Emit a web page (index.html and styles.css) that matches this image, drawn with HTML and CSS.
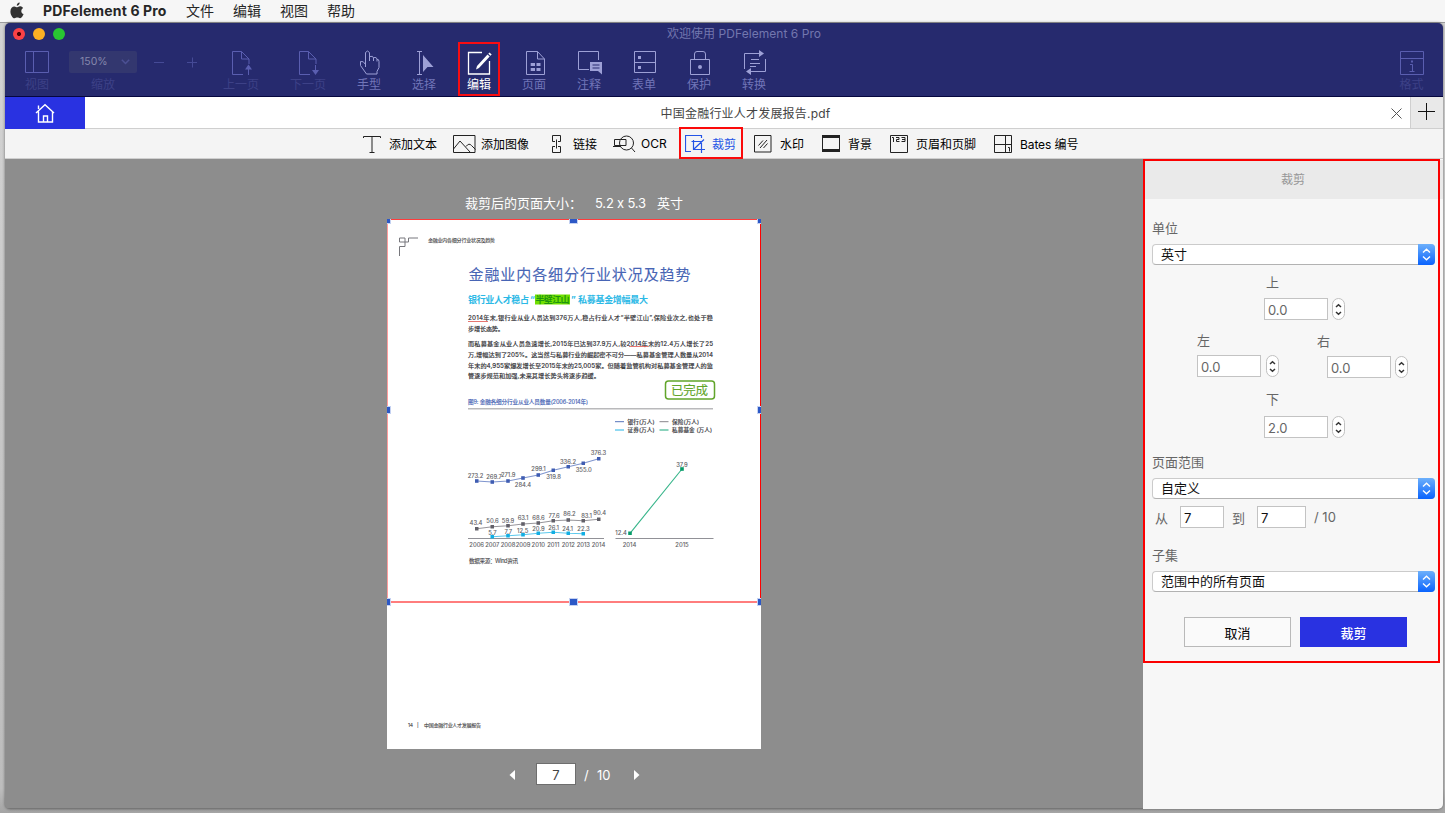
FILE: index.html
```
<!DOCTYPE html>
<html lang="zh-CN">
<head>
<meta charset="utf-8">
<title>PDFelement 6 Pro</title>
<link rel="stylesheet" href="styles.css">
</head>
<body>
<nav class="menubar">
  <svg class="apple" width="14" height="17" viewBox="0 0 14 17"><path d="M9.700 0.500c0.100 1.600-1.200 3.100-2.900 3.200C6.600 2.200 8 0.700 9.700 0.500zM9.800 4.300c0.700 0 2.200 0.200 3.300 1.600-2.600 1.700-2.300 5 0.500 6.200-0.600 1.700-2 4.100-3.500 4.100-1.100 0-1.500-0.700-2.800-0.700-1.300 0-1.700 0.700-2.800 0.700C2.500 16.200 0.400 12.600 0.400 9.400c0-3.200 2-5 4-5 1.200 0 2.100 0.800 2.900 0.800 0.700 0 1.600-0.900 2.500-0.900z"/></svg>
  <strong class="app">PDFelement 6 Pro</strong>
  <span>文件</span><span>编辑</span><span>视图</span><span>帮助</span>
</nav>
<div class="window">
  <header class="titlebar">
    <div class="lights"><i class="red"></i><i class="yellow"></i><i class="green"></i></div>
    <div class="wtitle">欢迎使用 <span>PDFelement 6 Pro</span></div>
  </header>
  <div class="tools">
    <div class="tool off view">
      <svg width="28" height="28"><path d="M2.500 3.500h23v21h-23zM10.500 3.500v21"/></svg>视图
    </div>
    <div class="tool off zoom">
      <div class="zoombox">150%<svg width="9" height="6"><path d="M0.800 0.800l3.700 3.700 3.700-3.700"/></svg></div>缩放
    </div>
    <div class="tool off minus"><svg width="28" height="28"><path d="M9 14.500h10"/></svg></div>
    <div class="tool off plus"><svg width="28" height="28"><path d="M9 14.500h10M14.500 9.500v10"/></svg></div>
    <div class="tool off prev">
      <svg width="28" height="28"><path d="M16 26.500H5.500V3.500h9l7.500 7.500v5M14.500 3.500v7.500H22M21.500 19v8"/><path class="fill" d="M21.500 16.500l3.500 5h-7z"/></svg>上一页
    </div>
    <div class="tool off next">
      <svg width="28" height="28"><path d="M16 26.500H5.500V3.500h9l7.500 7.500v5M14.500 3.500v7.500H22M21.500 17v7"/><path class="fill" d="M21.500 27l3.500-5h-7z"/></svg>下一页
    </div>
    <div class="tool hand">
      <svg width="28" height="28"><path d="M10.500 19V4.500q2-3 4 0V13M14.500 8.500q4-1 4 1.500v3M18.500 9.500q3.500-0.500 3.500 1.500v2.500M22 11.500q2-0.500 2 2v6l-2 4v2.500H11.500l-6-8.500v-4q3-1 5 3"/></svg>手型
    </div>
    <div class="tool">
      <svg width="28" height="28"><path d="M7 3.500h5M7 26.500h5M9.500 3.500v23"/><path class="fill" d="M13 7l10.500 12h-6L13 24z"/></svg>选择
    </div>
    <div class="tool on">
      <svg width="28" height="28"><path d="M17 4.500H3.500v21.500h21V13" stroke-width="1.300"/><path class="fill" d="M11 21.500l1-3.500L22.500 6.500l2.200 2L14 20zM23.300 5.700l1.200-1.200 2.200 2-1.200 1.300z"/></svg>编辑
    </div>
    <div class="tool">
      <svg width="28" height="28"><path d="M6.500 3.500h11l7 7.500v15.500h-18zM17.500 3.500v7.500h7"/><path class="fill" d="M10.700 15h4.300v3h-4.300zM16.500 15h4v3h-4zM10.700 20h4.300v3h-4.300zM16.500 20h4v3h-4z"/></svg>页面
    </div>
    <div class="tool">
      <svg width="28" height="28"><path d="M14 21.500H3.500v-18h20V12"/><path class="fill" fill-rule="evenodd" d="M15 14h12v12.500l-4-3.500h-8zM17.500 16.500v1h7v-1zM17.500 19.500v1h7v-1z"/></svg>注释
    </div>
    <div class="tool">
      <svg width="28" height="28"><path d="M4.500 3.500h21v21h-21zM4.500 14.500h21"/><path class="fill" d="M8 8h3v3H8zM8 18h3v3H8z"/></svg>表单
    </div>
    <div class="tool">
      <svg width="28" height="28"><path d="M5.500 11.500h19v15h-19zM9.500 11.500V6q0-2.500 2.500-2.500h6q2.500 0 2.500 2.500v5.500"/><circle class="fill" cx="15" cy="19" r="2"/></svg>保护
    </div>
    <div class="tool">
      <svg width="28" height="28"><path d="M4.500 21V5.500H19M8 23.500h17.500V11M11 11.500h8M10 15.500h10M10 18.500h6"/><path class="fill" d="M19 2l5 3.500-5 3.500zM11 20l-5 3.500 5 3.500z"/></svg>转换
    </div>
    <div class="tool off format">
      <svg width="28" height="28"><path d="M2.500 3.500h23v23h-23zM2.500 10.500h23M12 16.500h2.500v7M11.500 23.500h5"/><path class="fill" d="M13 12.500h2v2h-2z"/></svg>格式
    </div>
  </div>
  <div class="tabs">
    <div class="home"><svg width="20" height="20"><path d="M1 10L10 1.800 19 10M3.500 8.500v10.500h14V8.500M8.500 19v-6h4v6M3.500 6V2.500"/></svg></div>
    <div class="tab">中国金融行业人才发展报告.pdf</div>
    <svg class="close" width="11" height="11"><path d="M0.500 0.500l10 10M10.500 0.500l-10 10"/></svg>
    <div class="add"><svg width="17" height="17"><path d="M0 8.500h17M8.500 0v17"/></svg></div>
  </div>
  <div class="subtools">
    <div class="sub s1"><svg width="18" height="18"><path d="M0.500 3V1.500h17V3M9 1.500v16M6.500 17.500h5"/></svg>添加文本</div>
    <div class="sub s2"><svg width="23" height="18"><path d="M0.500 0.500h21.500v17H0.500zM0.500 14L7 6l10 11M13 11.500q3-4 5.500-1l4 4"/></svg>添加图像</div>
    <div class="sub s3"><svg width="10" height="18"><path d="M3 6.500H0.500v-6h8v6H6M3 11.500H0.500v6h8v-6H6M4.500 4.500v9"/></svg>链接</div>
    <div class="sub s4"><svg width="23" height="18"><path d="M7 4.500H1.500v6H13v-6H8M0 11.500h8"/><circle cx="13.500" cy="8" r="7"/><path d="M18.500 13l3.500 4"/></svg>OCR</div>
    <div class="sub s5"><svg width="21" height="18"><path d="M6 16.500H0.500V0.500h16V3M8.500 5v9.500H20M6.500 6.500h10V18M9 14L19 4.500"/></svg>裁剪</div>
    <div class="sub s6"><svg width="18" height="18"><path d="M0.500 0.500h16.500v16.500H0.500zM4.500 10.500L9 5.500M6 13l7-8M9.500 13l4-4.500"/></svg>水印</div>
    <div class="sub s7"><svg width="19" height="18"><path d="M0.500 0.500h17v16h-17z"/><path class="fill" d="M0 0h18v3H0zM0 14h18v3H0z"/></svg>背景</div>
    <div class="sub s8"><svg width="19" height="18"><path d="M0.500 0.500h17v17h-17z"/><path d="M2 2.500h1.500V7M6 2.500h3v2h-2.500v2h3M11.500 2.500h3.500v4h-3.500M12 4.500h3"/></svg>页眉和页脚</div>
    <div class="sub s9"><svg width="19" height="18"><path d="M0.500 0.500h17v17h-17zM11.500 0.500v17M0.500 9.500h17M14 12.500h1.500v4"/></svg>Bates 编号</div>
  </div>
  <div class="work">
    <main class="canvas">
      <div class="size"><span>裁剪后的页面大小：</span><span>5.2 x 5.3</span><span>英寸</span></div>
      <div class="page">
        <svg class="sheet" width="374" height="529" viewBox="387 220 374 529">
          <g class="mark"><path d="M399.500 256v-9.500h5.500v-8.500h-5.500v4h9v-4h9.500" /></g>
          <g class="small">
            <text x="428" y="242.300" textLength="67">金融业内各细分行业状况及趋势</text>
            <text x="408" y="727.300" textLength="5">14</text><text x="417" y="727">|</text>
            <text x="424" y="727.300" textLength="57">中国金融行业人才发展报告</text>
          </g>
          <text class="h1" x="468.500" y="280.300" textLength="222">金融业内各细分行业状况及趋势</text>
          <rect x="535" y="294.500" width="35" height="10" fill="#70e000"/>
          <g class="h2">
            <text x="468" y="303" textLength="61">银行业人才稳占</text><text x="530" y="303">“</text>
            <text x="535.500" y="303" textLength="34" class="hl">半壁江山</text><text x="571" y="303">”</text>
            <text x="578" y="303" textLength="70">私募基金增幅最大</text>
          </g>
          <g class="body">
            <text x="468" y="320" textLength="245">2014年末,银行业从业人员达到376万人,稳占行业人才“半壁江山”,保险业次之,也处于稳</text>
            <text x="468" y="331" textLength="36">步增长态势。</text>
            <text x="468" y="345.500" textLength="245">而私募基金从业人员急速增长,2015年已达到37.9万人,较2014年末的12.4万人增长了25</text>
            <text x="468" y="356.500" textLength="245">万,增幅达到了205%。这当然与私募行业的崛起密不可分——私募基金管理人数量从2014</text>
            <text x="468" y="367.500" textLength="245">年末的4,955家爆发增长至2015年末的25,005家。但随着监管机构对私募基金管理人的监</text>
            <text x="468" y="378" textLength="132">管逐步规范和加强,未来其增长势头将逐步趋缓。</text>
          </g>
          <path d="M468 321.500h20M629 346.500h19" stroke="#e0544c" stroke-width="0.800"/>
          <rect x="665.500" y="381" width="49" height="18" rx="3" class="stampbox"/>
          <text class="stamp" x="671" y="394.700" textLength="37">已完成</text>
          <text class="cap" x="468" y="403.500" textLength="120">图9: 金融各细分行业从业人员数量(2006-2014年)</text>
          <path d="M468 408.700h245" stroke="#b9b9bb" stroke-width="1.600"/>
          <g class="keys">
            <path d="M615 421.700h9" stroke="#5673bb"/><path d="M659.500 421.700h9" stroke="#88868c"/>
            <path d="M615 430h9" stroke="#22b4e6"/><path d="M659.500 430h9" stroke="#19a67a"/>
          </g>
          <g class="legend">
            <text x="627.500" y="423.800" textLength="27">银行(万人)</text><text x="672" y="423.800" textLength="27">保险(万人)</text>
            <text x="627.500" y="432.300" textLength="27">证券(万人)</text><text x="672" y="432.300" textLength="40">私募基金 (万人)</text>
          </g>
          <path d="M468 538.500h136M615.500 538.500h98" stroke="#85858b" stroke-width="0.900"/>
          <g class="line">
            <path stroke="#7f95ce" marker-mid="url(#b)" marker-start="url(#b)" marker-end="url(#b)" d="M476.700 481L492.300 482L508 481L523 478L538.300 475L553.300 470.300L568.300 466.700L583.300 463.300L598.700 458.700"/>
            <path stroke="#98969b" marker-mid="url(#g)" marker-start="url(#g)" marker-end="url(#g)" d="M476.700 528.700L492.300 526.700L508 525.700L523 524L538.300 523L553.300 520.700L568.300 520L583.300 520.700L598.700 519.300"/>
            <path stroke="#5cc9ed" marker-mid="url(#c)" marker-start="url(#c)" marker-end="url(#c)" d="M492.300 536.700L508 535.700L523 534.700L538.300 533.300L553.300 532.300L568.300 533.300L583.300 533.700"/>
            <path stroke="#35b489" marker-start="url(#t)" marker-end="url(#t)" d="M630 533.300L682 469"/>
          </g>
          <defs>
            <marker id="b" markerUnits="userSpaceOnUse" markerWidth="4" markerHeight="4" refX="2" refY="2"><path d="M0.200 0.200h3.600v3.600H0.200z" fill="#3f5db2"/></marker>
            <marker id="g" markerUnits="userSpaceOnUse" markerWidth="4" markerHeight="4" refX="2" refY="2"><path d="M0.200 0.200h3.600v3.600H0.200z" fill="#626069"/></marker>
            <marker id="c" markerUnits="userSpaceOnUse" markerWidth="4" markerHeight="4" refX="2" refY="2"><path d="M0.200 0.200h3.600v3.600H0.200z" fill="#12aee3"/></marker>
            <marker id="t" markerUnits="userSpaceOnUse" markerWidth="4" markerHeight="4" refX="2" refY="2"><path d="M0.200 0.200h3.600v3.600H0.200z" fill="#079b68"/></marker>
          </defs>
          <g class="num">
            <text x="475.500" y="477.700">273.2</text><text x="494" y="478.500">269.7</text><text x="508.200" y="476.700">271.9</text><text x="523" y="486.500">284.4</text><text x="538.500" y="471">299.1</text><text x="553.500" y="479.200">319.8</text><text x="568" y="463.500">336.2</text><text x="583.700" y="472.300">355.0</text><text x="598.500" y="455.200">376.3</text>
            <text x="476" y="525">43.4</text><text x="492.500" y="523">50.6</text><text x="508" y="522.500">59.9</text><text x="523" y="520.300">63.1</text><text x="538.500" y="519.500">68.6</text><text x="554" y="517.500">77.6</text><text x="569.500" y="516.300">86.2</text><text x="586.500" y="517.500">83.1</text><text x="599.700" y="515.200">90.4</text>
            <text x="492.500" y="534.500">5.7</text><text x="508.300" y="533.500">7.7</text><text x="522.700" y="532.500">12.5</text><text x="538.500" y="530.800">20.9</text><text x="553.500" y="529.500">26.1</text><text x="567.500" y="530.800">24.1</text><text x="583.500" y="530.800">22.3</text>
            <text x="621" y="534.800">12.4</text><text x="682" y="467">37.9</text>
            <text x="476.700" y="547.200">2006</text><text x="492.300" y="547.200">2007</text><text x="508" y="547.200">2008</text><text x="523" y="547.200">2009</text><text x="538.300" y="547.200">2010</text><text x="553.300" y="547.200">2011</text><text x="568.300" y="547.200">2012</text><text x="583.300" y="547.200">2013</text><text x="598.500" y="547.200">2014</text>
            <text x="629.500" y="547.200">2014</text><text x="682" y="547.200">2015</text>
          </g>
          <text class="src" x="469" y="563" textLength="49">数据来源：Wind资讯</text>
        </svg>
        <div class="crop">
          <i class="h tl"></i><i class="h tc"></i><i class="h tr"></i><i class="h ml"></i><i class="h mr"></i><i class="h bl"></i><i class="h bc"></i><i class="h br"></i>
        </div>
      </div>
      <div class="pager">
        <svg width="6" height="10"><path d="M6 0v10L0.500 5z"/></svg>
        <div class="pnum">7</div><span class="slash">/</span><span class="total">10</span>
        <svg width="6" height="10"><path d="M0 0v10l5.500-5z"/></svg>
      </div>
    </main>
    <aside class="panel">
      <div class="frame"></div>
      <h2>裁剪</h2>
      <label class="cap1">单位</label>
      <div class="select">英寸<b><svg width="9" height="13"><path d="M1 4.500l3.500-3.300L8 4.500M1 8.500l3.500 3.300L8 8.500"/></svg></b></div>
      <div class="margins">
        <div class="m top"><label>上</label><div class="field"><span>0.0</span><b><svg width="7" height="13"><path d="M1 4l2.500-2.300L6 4M1 9l2.500 2.300L6 9"/></svg></b></div></div>
        <div class="sides">
          <div class="m left"><label>左</label><div class="field"><span>0.0</span><b><svg width="7" height="13"><path d="M1 4l2.500-2.300L6 4M1 9l2.500 2.300L6 9"/></svg></b></div></div>
          <div class="m right"><label>右</label><div class="field"><span>0.0</span><b><svg width="7" height="13"><path d="M1 4l2.500-2.300L6 4M1 9l2.500 2.300L6 9"/></svg></b></div></div>
        </div>
        <div class="m bottom"><label>下</label><div class="field"><span>2.0</span><b><svg width="7" height="13"><path d="M1 4l2.500-2.300L6 4M1 9l2.500 2.300L6 9"/></svg></b></div></div>
      </div>
      <label class="cap2">页面范围</label>
      <div class="select">自定义<b><svg width="9" height="13"><path d="M1 4.500l3.500-3.300L8 4.500M1 8.500l3.500 3.300L8 8.500"/></svg></b></div>
      <div class="range">从<span class="from">7</span>到<span class="to">7</span>/ 10</div>
      <label class="cap3">子集</label>
      <div class="select">范围中的所有页面<b><svg width="9" height="13"><path d="M1 4.500l3.500-3.300L8 4.500M1 8.500l3.500 3.300L8 8.500"/></svg></b></div>
      <div class="buttons"><button>取消</button><button class="primary">裁剪</button></div>
    </aside>
  </div>
</div>
</body>
</html>
```
FILE: styles.css
```
*, *::after { box-sizing: border-box; }
body {
  margin: 0; width: 1445px; height: 813px; overflow: hidden;
  background: linear-gradient(#d4d4d4, #bdbdbd 97%, #a4a4a4);
  font-family: Inter, "Noto Sans CJK SC", sans-serif;
  font-feature-settings: "calt" 0;
  font-size: 12px; color: #000;
}
svg { display: block; flex: none; fill: none; stroke: currentColor; }
svg .fill { fill: currentColor; stroke: none; }
i { display: block; }

.menubar {
  display: flex; align-items: center; height: 23px; padding-left: 11px;
  background: #f6f6f6; border-bottom: 1px solid #9c9c9e;
  font-size: 14px; line-height: 22px; color: #262626; white-space: nowrap;
}
.apple { fill: #333; stroke: none; margin: -2px 19px 0 -1px; }
.app { width: 125px; margin-right: 18px; letter-spacing: 0.150px; font-weight: 700; }
.menubar span { margin-right: 19px; }

.window {
  width: 1438px; height: 786px; margin-left: 5px;
  display: flex; flex-direction: column; overflow: hidden;
  border-radius: 5px; background: #8d8d8d;
  box-shadow: 0 0 3px rgba(0, 0, 0, 0.5);
}
.titlebar { position: relative; flex: none; height: 22px; background: #262a6e; }
.lights { display: flex; gap: 8px; padding: 5px 0 0 8px; }
.lights i { width: 12px; height: 12px; border-radius: 50%; }
.red { background: radial-gradient(circle, #4b0003 0 1.800px, #fc4146 2.300px); }
.yellow { background: #fdb023; }
.green { background: #29c732; }
.wtitle {
  position: absolute; inset: 0; line-height: 22px; text-align: center;
  color: #7377ae; letter-spacing: 0.050px; padding-left: 40px;
}
.tools {
  display: flex; flex: none; height: 52px; padding-top: 3px;
  background: #262a6e; border-bottom: 1px solid #06073f;
}
.tool {
  position: relative; display: flex; flex-direction: column; align-items: center; flex: none;
  width: 55px; height: 48px; line-height: 18px; color: #7175b8; white-space: nowrap;
}
.tool svg { color: #9da0d6; }
.tool.off { color: #3d4187; }
.tool.off > svg { color: #5a5eb0; }
.tool.on { color: #fff; }
.tool.on svg { color: #fff; }
.tool.on::after {
  content: ""; position: absolute; left: 6.500px; top: -6px; width: 42px; height: 54px;
  border: 2px solid #f80d12;
}
.tool.view { width: 64px; }
.tool.zoom { width: 68px; }
.zoombox {
  display: flex; align-items: center; justify-content: space-between;
  width: 68px; height: 22px; margin: 3px 0; padding: 0 7px 0 11px;
  border-radius: 2px; background: #33376f; color: #8588ac; font-size: 10.500px;
}
.zoombox svg { color: #4c5094; stroke-width: 1.500; }
.tool.minus { width: 44px; }
.tool.plus { width: 22px; }
.tool.minus svg, .tool.plus svg { color: #454a96; }
.tool.prev { width: 76px; }
.tool.next { width: 58px; }
.tool.hand { margin-left: 4.500px; }
.tool.format { margin-left: auto; margin-right: 4px; }

.tabs { display: flex; flex: none; align-items: center; height: 32px; background: #fff; border-bottom: 1px solid #cfcfcf; }
.home { display: grid; place-items: center; width: 80px; height: 32px; margin-bottom: -1px; background: #2932e1; color: #fff; }
.home svg { stroke-width: 1.400; }
.tab { flex: 1; text-align: center; color: #444; padding-left: 15px; letter-spacing: 0.2px; }
.close { margin: 2px 8px 0 0; color: #555; }
.add { width: 33px; height: 31px; padding: 6px 0 0 7px; background: #e9e9e9; border-left: 1px solid #cfcfcf; color: #111; }

.subtools { display: flex; flex: none; align-items: center; height: 30px; background: #f4f4f4; border-bottom: 1px solid #cfcfcf; }
.sub { display: flex; align-items: center; flex: none; height: 30px; white-space: nowrap; }
.sub svg { color: #222; }
.s1 { width: 89px; margin-left: 358px; gap: 8px; }
.s2 { width: 100px; gap: 5px; padding-left: 1px; }
.s3 { width: 61px; gap: 11px; }
.s4 { width: 66px; gap: 5px; }
.s5 {
  width: 64px; height: 32px; margin-top: -1px; padding-left: 4px; gap: 6px;
  border: 2px solid #fb0a0a; color: #2454e6;
}
.s5 svg { color: #2454e6; stroke-width: 1.200; margin-top: 1px; }
.s6 { width: 79px; padding-left: 11px; gap: 8px; }
.s7 { width: 68px; gap: 7px; }
.s8 { width: 104px; gap: 7px; }
.s9 { gap: 7px; letter-spacing: -0.1px; }

.work { display: flex; flex: 1; min-height: 0; }
.canvas { width: 1138px; display: flex; flex-direction: column; background: #8d8d8d; border-bottom: 1px solid #777; }
.size { display: flex; height: 61px; padding: 32px 0 0 460px; line-height: 24px; color: #fff; font-size: 13px; white-space: nowrap; }
.size span:nth-child(1) { width: 130px; }
.size span:nth-child(2) { width: 62px; letter-spacing: -0.2px; }
.page { position: relative; width: 374px; height: 529px; margin-left: 382px; background: #fff; }
.sheet { fill: #48484c; stroke: none; stroke-width: 1; }
.sheet text { font-family: Inter, "Noto Sans CJK SC", sans-serif; }
.mark { fill: none; stroke: #77777c; }
.small { font-size: 5px; fill: #444; stroke: #444; stroke-width: 0.100; }
.h1 { font-size: 15px; fill: #4765b5; stroke: #4765b5; stroke-width: 0.100; }
.h2 { font-size: 9px; font-weight: 700; fill: #2cb9e6; }
.hl { fill: #1e9410; }
.body { font-size: 6.200px; font-weight: 500; fill: #36363a; stroke: #36363a; stroke-width: 0.100; }
.stampbox { fill: #fff; stroke: #62a52b; stroke-width: 1.500; }
.stamp { font-size: 12.500px; fill: #62a52b; stroke: #62a52b; stroke-width: 0.100; }
.cap { font-size: 5.600px; fill: #4765b5; stroke: #4765b5; stroke-width: 0.150; }
.legend { font-size: 5.600px; font-weight: 500; stroke: #48484c; stroke-width: 0.150; }
.line { fill: none; stroke-width: 1.100; }
.line path { fill: none; }
.num { font-size: 5.900px; text-anchor: middle; fill: #5b5b62; stroke: #5b5b62; stroke-width: 0.100; }
.src { font-size: 5.600px; stroke: #48484c; stroke-width: 0.100; }

.crop {
  position: absolute; left: 0; top: -1px; width: 374px; height: 384px;
  border: 1px solid #ff3b3b; border-left-color: #ff9d9d; border-right-color: #f00;
  border-bottom: 2px solid #ff7d7d; clip-path: inset(0 0 -3px 0);
}
.h { position: absolute; width: 9px; height: 8px; background: #2c58c6; border: 1px solid #c5d2f2; }
.tl, .ml, .bl { left: -6px; }
.tr, .mr, .br { right: -6px; }
.tc, .bc { left: 181px; }
.tl, .tc, .tr { top: -4px; }
.ml, .mr { top: 186px; }
.bl, .bc, .br { bottom: -5px; }

.pager { display: flex; align-items: center; height: 22px; margin: 15px 0 0 504px; color: #fff; font-size: 13px; }
.pager svg { fill: #fff; stroke: none; }
.pnum { width: 40px; height: 22px; margin: -2px 8px 0 21px; background: #fff; border: 1px solid #6e6e6e; color: #444; text-align: center; line-height: 22px; }
.slash { width: 13px; }
.total { width: 37px; }

.panel { position: relative; width: 300px; padding: 1px 8px 0 9px; background: #f7f7f7; font-size: 13px; color: #666; }
.frame { position: absolute; left: 0; top: 0; width: 297px; height: 504px; border: 2px solid #fb0000; z-index: 1; }
.panel h2 { margin: 0 -8px 0 -9px; height: 39px; line-height: 40px; text-align: center; font-size: 12px; font-weight: 400; color: #979797; background: #eaeaea; }
.panel > label { display: block; height: 20px; line-height: 20px; }
.cap1 { margin: 19px 0 6px; }
.cap2 { margin: 15px 0 6px; }
.cap3 { margin: 17px 0 6px; }
.select {
  position: relative; height: 21px; padding-left: 8px; line-height: 19px;
  background: #fff; border: 1px solid #cbcbcb; border-bottom-color: #b2b2b2; border-radius: 4px; color: #111;
}
.select b {
  position: absolute; right: -1px; top: -1px; width: 17px; height: 21px;
  display: grid; place-items: center; border-radius: 0 4px 4px 0;
  background: linear-gradient(#6db0fb, #0a63fd); color: #fff;
}
.select svg { stroke-width: 1.400; }
.margins { display: flex; flex-direction: column; height: 172px; padding-top: 7px; }
.m { width: 82px; }
.m label { display: block; height: 20px; margin-left: 2px; line-height: 20px; }
.top, .bottom { flex: none; margin-left: 112px; }
.top { height: 58px; }
.bottom { height: 50px; }
.bottom .field { margin-top: 7px; }
.sides { display: flex; flex: none; gap: 48px; height: 59px; padding-left: 45px; }
.left label { margin-left: 0; }
.left .field { gap: 5px; margin-top: 5px; }
.right { padding-top: 1px; }
.right .field { margin-top: 5px; }
.right label { margin-left: -10px; }
.field { display: flex; align-items: center; gap: 4px; margin-top: 6px; }
.field span { flex: none; width: 64px; height: 22px; padding-left: 3px; line-height: 23px; background: #fff; border: 1px solid #c3c3c3; }
.field b { flex: none; width: 13px; height: 22px; display: grid; place-items: center; background: #fff; border: 1px solid #c0c0c0; border-radius: 7px; color: #333; }
.field svg { stroke-width: 1.500; }
.range { display: flex; align-items: center; height: 22px; margin-top: 7px; padding-left: 3px; white-space: nowrap; }
.range span { height: 22px; padding-left: 3px; line-height: 22px; background: #fff; border: 1px solid #c3c3c3; color: #111; }
.from { width: 44px; margin: 0 8px 0 12px; }
.to { width: 49px; margin: 0 8px 0 12px; }
.buttons { display: flex; gap: 9px; margin: 25px 0 0 32px; }
button { width: 107px; height: 30px; padding: 0; border: 1px solid #b9b9b9; background: #fafafa; font: 13px Inter, "Noto Sans CJK SC", sans-serif; color: #000; }
.primary { background: #2932e1; border-color: #2932e1; color: #fff; font-weight: 500; }
```
